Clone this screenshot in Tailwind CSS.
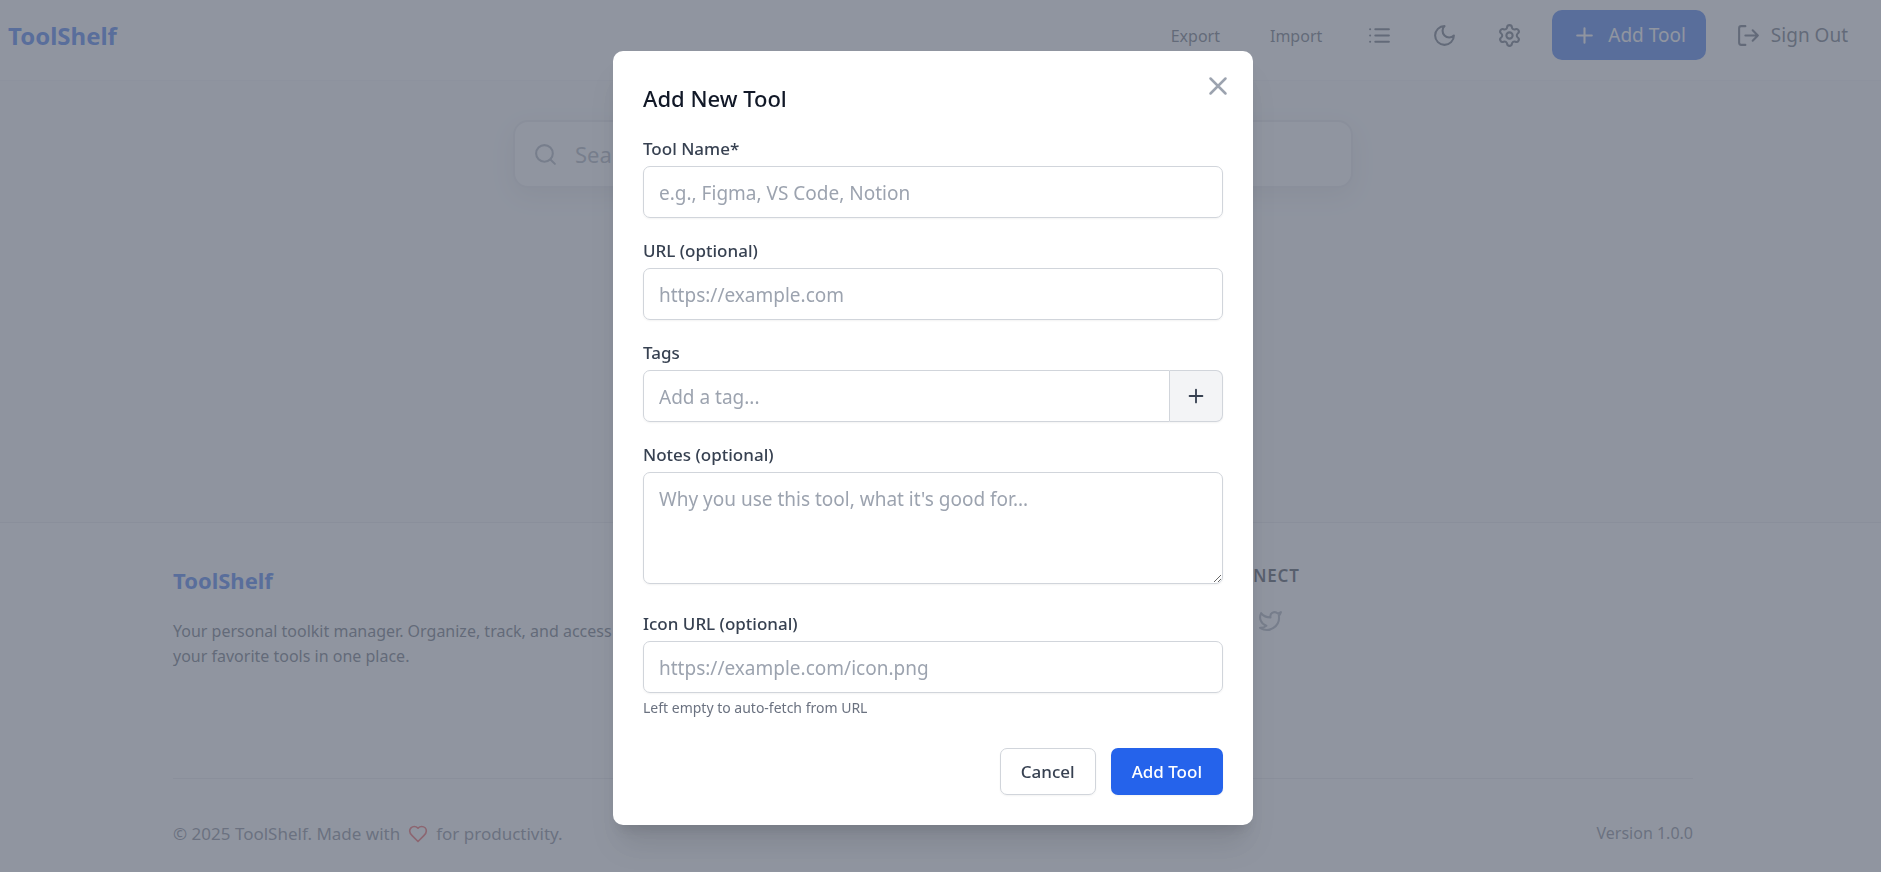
<!DOCTYPE html>
<html lang="en">
  <head>
    <meta charset="UTF-8" />
    <meta name="viewport" content="width=device-width, initial-scale=1.0" />
    <title>ToolShelf</title>
    <script src="https://cdn.jsdelivr.net/npm/@tailwindcss/browser@4"></script>
  </head>
  <body
    class="min-h-screen flex flex-col overflow-hidden bg-[#f9fafb] font-['Segoe_UI','Noto_Sans',sans-serif] text-[19px] leading-[30px] text-[#111827]"
  >
    <!-- Header -->
    <header class="bg-white border-b border-[#f3f4f6] pt-[10px] pb-5 pl-2 pr-[33px]">
      <div class="flex items-center justify-between">
        <a href="#" class="pt-[2px] text-[24px] font-bold text-[#2563eb]">ToolShelf</a>

        <nav class="flex items-center text-[#4b5563]">
          <button class="px-[25px] pt-[2px] text-[16px]">Export</button>
          <button class="pl-[25px] pr-[35px] pt-[2px] text-[16px]">Import</button>
          <button aria-label="List view" class="p-[10px]">
            <svg class="size-[25px]" viewBox="0 0 24 24" fill="none" stroke="currentColor" stroke-width="2" stroke-linecap="round" stroke-linejoin="round">
              <path d="M8 6h13M8 12h13M8 18h13M3 6h.01M3 12h.01M3 18h.01" />
            </svg>
          </button>
          <button aria-label="Dark mode" class="ml-5 p-[10px]">
            <svg class="size-[25px]" viewBox="0 0 24 24" fill="none" stroke="currentColor" stroke-width="2" stroke-linecap="round" stroke-linejoin="round">
              <path d="M12 3a6 6 0 0 0 9 9 9 9 0 1 1-9-9Z" />
            </svg>
          </button>
          <button aria-label="Settings" class="ml-5 p-[10px]">
            <svg class="size-[25px]" viewBox="0 0 24 24" fill="none" stroke="currentColor" stroke-width="2" stroke-linecap="round" stroke-linejoin="round">
              <path d="M9.671 4.136a2.34 2.34 0 0 1 4.659 0 2.34 2.34 0 0 0 3.319 1.915 2.34 2.34 0 0 1 2.33 4.033 2.34 2.34 0 0 0 0 3.831 2.34 2.34 0 0 1-2.33 4.033 2.34 2.34 0 0 0-3.319 1.915 2.34 2.34 0 0 1-4.659 0 2.34 2.34 0 0 0-3.32-1.915 2.34 2.34 0 0 1-2.33-4.033 2.34 2.34 0 0 0 0-3.831A2.34 2.34 0 0 1 6.35 6.051a2.34 2.34 0 0 0 3.319-1.915" />
              <circle cx="12" cy="12" r="3" />
            </svg>
          </button>
          <button class="ml-5 flex items-center gap-[11px] rounded-[10px] bg-[#2563eb] px-5 py-[10px] text-white">
            <svg class="size-[25px]" viewBox="0 0 24 24" fill="none" stroke="currentColor" stroke-width="2" stroke-linecap="round" stroke-linejoin="round">
              <path d="M5 12h14M12 5v14" />
            </svg>
            Add Tool
          </button>
          <button class="ml-[30px] flex items-center gap-[10px]">
            <svg class="size-[25px]" viewBox="0 0 24 24" fill="none" stroke="currentColor" stroke-width="2" stroke-linecap="round" stroke-linejoin="round">
              <path d="M9 21H5a2 2 0 0 1-2-2V5a2 2 0 0 1 2-2h4M16 17l5-5-5-5M21 12H9" />
            </svg>
            Sign Out
          </button>
        </nav>
      </div>
    </header>

    <!-- Search -->
    <main class="flex-1 pt-[39px] pr-[15px]">
      <div class="mx-auto flex max-w-[840px] items-center gap-[17px] rounded-[15px] border-2 border-[#e5e7eb] bg-white px-[18px] py-[17px] shadow-[0_8px_24px_rgba(0,0,0,0.09)]">
        <svg class="size-[25px] shrink-0 text-[#9ca3af]" viewBox="0 0 24 24" fill="none" stroke="currentColor" stroke-width="2" stroke-linecap="round" stroke-linejoin="round">
          <circle cx="11" cy="11" r="8" />
          <path d="m21 21-4.3-4.3" />
        </svg>
        <input type="text" aria-label="Search tools" placeholder="Search tools..." class="w-full text-[22px] placeholder:text-[#9ca3af]" />
      </div>
    </main>

    <!-- Footer -->
    <footer class="border-t border-[#e5e7eb] bg-white pr-[15px] text-[17px] leading-[25px]">
      <div class="mx-auto max-w-[1600px] px-10 pt-10">
        <div class="grid h-[215px] grid-cols-3 gap-10">
          <div>
            <a href="#" class="block text-[22px] leading-[35px] font-bold text-[#2563eb]">ToolShelf</a>
            <p class="mt-[21px] text-[16px] text-[#4b5563]">
              Your personal toolkit manager. Organize, track, and access all
              your favorite tools in one place.
            </p>
          </div>
          <div>
            <h3 class="font-semibold uppercase tracking-wider text-[#1f2937]">Resources</h3>
          </div>
          <div>
            <h3 class="font-semibold uppercase tracking-wider text-[#1f2937]">Connect</h3>
            <div class="mt-5 flex gap-5 text-[#9ca3af]">
              <a href="#" aria-label="GitHub">
                <svg class="size-[25px]" viewBox="0 0 24 24" fill="none" stroke="currentColor" stroke-width="2" stroke-linecap="round" stroke-linejoin="round">
                  <path d="M15 22v-4a4.8 4.8 0 0 0-1-3.5c3 0 6-2 6-5.5.08-1.25-.27-2.48-1-3.5.28-1.15.28-2.35 0-3.5 0 0-1 0-3 1.5-2.64-.5-5.36-.5-8 0C6 2 5 2 5 2c-.3 1.15-.3 2.35 0 3.5A5.403 5.403 0 0 0 4 9c0 3.5 3 5.5 6 5.5-.39.49-.68 1.05-.85 1.65-.17.6-.22 1.23-.15 1.85v4M9 18c-4.51 2-5-2-7-2" />
                </svg>
              </a>
              <a href="#" aria-label="Twitter">
                <svg class="size-[25px]" viewBox="0 0 24 24" fill="none" stroke="currentColor" stroke-width="2" stroke-linecap="round" stroke-linejoin="round">
                  <path d="M22 4s-.7 2.1-2 3.4c1.6 10-9.4 17.3-18 11.6 2.2.1 4.4-.6 6-2C3 15.5.5 9.6 3 5c2.2 2.6 5.6 4.1 9 4-.9-4.2 4-6.6 7-3.8 1.1 0 3-1.2 3-1.2z" />
                </svg>
              </a>
            </div>
          </div>
        </div>

        <div class="flex items-center justify-between border-t border-[#e5e7eb] pt-[42px] pb-[26px] text-[#6b7280]">
          <p class="flex items-center">
            © 2025 ToolShelf. Made with
            <svg class="mx-2 size-5 text-[#ef4444]" viewBox="0 0 24 24" fill="none" stroke="currentColor" stroke-width="2" stroke-linecap="round" stroke-linejoin="round">
              <path d="M19 14c1.49-1.46 3-3.21 3-5.5A5.5 5.5 0 0 0 16.5 3c-1.76 0-3 .5-4.5 2-1.5-1.5-2.74-2-4.5-2A5.5 5.5 0 0 0 2 8.500c0 2.300 1.500 4.050 3 5.500l7 7Z" />
            </svg>
            for productivity.
          </p>
          <p class="text-[16px]">Version 1.0.0</p>
        </div>
      </div>
    </footer>

    <!-- Add tool dialog -->
    <div class="fixed inset-0 flex items-center justify-center bg-[#6b7280]/75 pt-1 pr-[15px]">
      <form role="dialog" aria-labelledby="dialogTitle" class="relative w-full max-w-[640px] rounded-[10px] bg-white p-[30px] shadow-[0_25px_31px_-6px_rgba(0,0,0,0.1),0_10px_12px_-6px_rgba(0,0,0,0.1)]">
        <button type="button" aria-label="Close" class="absolute top-5 right-5 text-[#9ca3af]">
          <svg class="size-[30px]" viewBox="0 0 24 24" fill="none" stroke="currentColor" stroke-width="2" stroke-linecap="round" stroke-linejoin="round">
            <path d="M18 6 6 18M6 6l12 12" />
          </svg>
        </button>

        <h2 id="dialogTitle" class="text-[22px] leading-[35px] font-medium">Add New Tool</h2>

        <div class="mt-5 space-y-5">
          <div>
            <label for="toolName" class="block text-[17px] leading-[25px] font-medium text-[#374151]">Tool Name*</label>
            <input id="toolName" type="text" placeholder="e.g., Figma, VS Code, Notion" class="mt-[5px] block h-[52px] w-full rounded-[7px] border border-[#d1d5db] px-[15px] pt-[2px] shadow-xs placeholder:text-[#9ca3af]" />
          </div>
          <div>
            <label for="toolUrl" class="block text-[17px] leading-[25px] font-medium text-[#374151]">URL (optional)</label>
            <input id="toolUrl" type="url" placeholder="https://example.com" class="mt-[5px] block h-[52px] w-full rounded-[7px] border border-[#d1d5db] px-[15px] pt-[2px] shadow-xs placeholder:text-[#9ca3af]" />
          </div>
          <div>
            <label for="toolTags" class="block text-[17px] leading-[25px] font-medium text-[#374151]">Tags</label>
            <div class="mt-[5px] flex h-[52px] rounded-[7px] shadow-xs">
              <input id="toolTags" type="text" placeholder="Add a tag..." class="min-w-0 flex-1 rounded-l-[7px] border border-[#d1d5db] px-[15px] pt-[2px] placeholder:text-[#9ca3af]" />
              <button type="button" aria-label="Add tag" class="rounded-r-[7px] border border-l-0 border-[#d1d5db] bg-[#f3f4f6] px-[15px] text-[#374151]">
                <svg class="size-[22px]" viewBox="0 0 24 24" fill="none" stroke="currentColor" stroke-width="2" stroke-linecap="round" stroke-linejoin="round">
                  <path d="M5 12h14M12 5v14" />
                </svg>
              </button>
            </div>
          </div>
          <div>
            <label for="toolNotes" class="block text-[17px] leading-[25px] font-medium text-[#374151]">Notes (optional)</label>
            <textarea id="toolNotes" rows="3" placeholder="Why you use this tool, what it's good for..." class="mt-[5px] block h-[112px] w-full rounded-[7px] border border-[#d1d5db] px-[15px] py-[11px] shadow-xs placeholder:text-[#9ca3af]"></textarea>
          </div>
          <div class="pt-[7px]">
            <label for="toolIcon" class="block text-[17px] leading-[25px] font-medium text-[#374151]">Icon URL (optional)</label>
            <input id="toolIcon" type="url" placeholder="https://example.com/icon.png" class="mt-[5px] block h-[52px] w-full rounded-[7px] border border-[#d1d5db] px-[15px] pt-[2px] shadow-xs placeholder:text-[#9ca3af]" />
            <p class="mt-[5px] text-[14px] leading-5 text-[#6b7280]">Left empty to auto-fetch from URL</p>
          </div>
        </div>

        <div class="mt-[30px] flex justify-end gap-[15px] text-[17px] leading-[25px] font-medium">
          <button type="button" class="rounded-[7px] border border-[#d1d5db] px-5 py-[10px] text-[#374151] shadow-xs">Cancel</button>
          <button type="submit" class="rounded-[7px] border border-transparent bg-[#2563eb] px-5 py-[10px] text-white shadow-xs">Add Tool</button>
        </div>
      </form>
    </div>
  </body>
</html>
